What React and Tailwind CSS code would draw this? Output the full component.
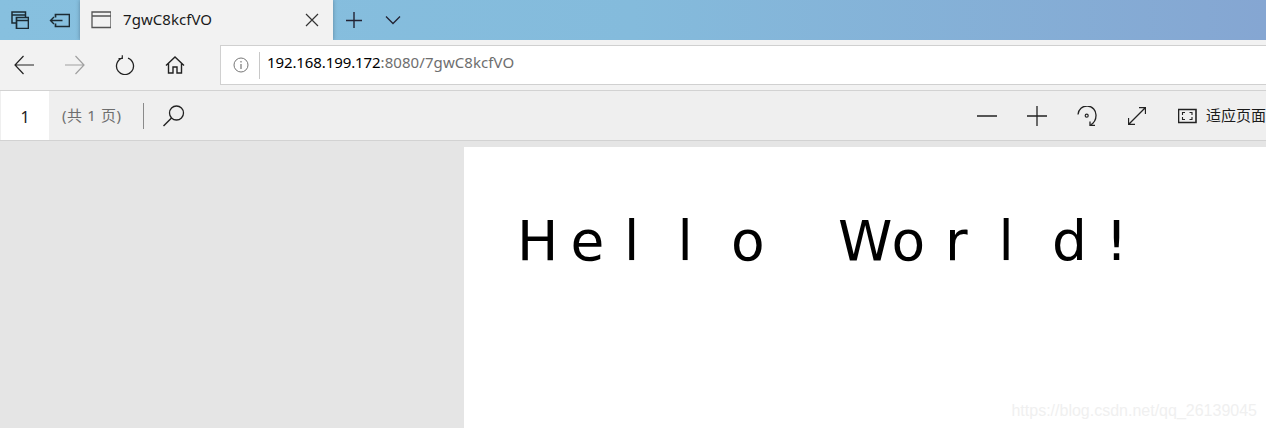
const ui = '[font-family:"Noto_Sans","Noto_Sans_CJK_SC",sans-serif]';
const hello = 'Hello World!'.split('');

function Icon({ size = 24, className = '', children }) {
    return (
        <svg width={size} height={size} viewBox={`0 0 ${size} ${size}`} fill="none" stroke="currentColor" className={className}>
            {children}
        </svg>
    );
}

function TabBar() {
    return (
        <div className="flex h-10 shrink-0 bg-gradient-to-r from-[#87c0df] via-[#84bbdc] to-[#85a6d2]">
            <div className="flex w-20 items-center text-[#1c2b33]">
                <Icon size={18} className="ml-[11px] shrink-0">
                    <path d="M5 12H1V1h13.500v5M1 4h13.500" strokeWidth="1.500" />
                    <path d="M5.500 6.500h12v11h-12zM5.500 9.500h12" strokeWidth="1.700" />
                </Icon>
                <Icon size={21} className="ml-[20px] shrink-0">
                    <path d="M1.500 10.500h12M5 7l-3.500 3.500L5 14" strokeWidth="1.400" />
                    <path d="M6.500 7.500v-3H20.500v12H6.500v-3" strokeWidth="1.700" />
                </Icon>
            </div>
            <div className="flex w-[253px] items-center bg-[#f2f2f2] shadow-[0_0_4px_rgba(40,60,80,0.45)]">
                <Icon size={20} className="ml-[11px] shrink-0 text-[#555]">
                    <path d="M1 2h19v15.500H1zM1 6h19" strokeWidth="1.300" />
                </Icon>
                <span className={`${ui} mb-[2px] ml-[12px] w-[182px] text-[15px] leading-none tracking-[0.05px] text-[#1a1a1a]`}>7gwC8kcfVO</span>
                <Icon size={14} className="shrink-0 text-[#333]">
                    <path d="M1 1l12 12M13 1L1 13" strokeWidth="1.200" />
                </Icon>
            </div>
            <div className="flex items-center text-[#223]">
                <Icon size={16} className="ml-[13px]">
                    <path d="M0 8.500h16M8 0v17" strokeWidth="1.400" />
                </Icon>
                <Icon size={16} className="ml-[23px]">
                    <path d="M1 4.500l7 7 7-7" strokeWidth="1.300" />
                </Icon>
            </div>
        </div>
    );
}

function AddressRow() {
    return (
        <div className="flex h-[51px] shrink-0 items-center border-b border-[#d2d2d2] bg-[#f2f2f2] pl-[14px]">
            <Icon size={20} className="shrink-0 text-[#222]">
                <path d="M1 10h19M9.500 1L1 10l8.500 9" strokeWidth="1.200" />
            </Icon>
            <Icon size={20} className="ml-[31px] shrink-0 text-[#a0a0a0]">
                <path d="M0 10h19M10.500 1l8.500 9-8.500 9" strokeWidth="1.200" />
            </Icon>
            <Icon size={20} className="ml-[30px] shrink-0 text-[#222]">
                <path d="M7 3.100A8.500 8.500 0 1 0 13 3.100" strokeWidth="1.300" />
                <path d="M7.300 0.200v3.300H3.500" strokeWidth="1.200" />
            </Icon>
            <Icon size={20} className="ml-[30px] shrink-0 text-[#222]">
                <path d="M1 10.500L10 2l9 8.500M3.500 8.500V18h4.500v-6h4v6h4.500V8.500" strokeWidth="1.400" />
            </Icon>
            <div className="ml-[35px] flex h-10 flex-1 items-center border border-[#d0d0d0] border-r-0 bg-white">
                <Icon size={16} className="ml-[12px] shrink-0 text-[#777]">
                    <circle cx="8" cy="8" r="7" strokeWidth="1" />
                    <path d="M8 7v5M8 4v1.500" strokeWidth="1.200" />
                </Icon>
                <div className="ml-[10px] h-[27px] w-px bg-[#c8c8c8]" />
                <span className={`${ui} mb-[5px] ml-[7px] text-[15px] tracking-[0.08px] text-[#6e6e6e]`}>
                    <span className="tracking-[-0.1px] text-black">192.168.199.172</span>:8080/7gwC8kcfVO
                </span>
            </div>
        </div>
    );
}

function PdfToolbar() {
    return (
        <div className={`${ui} flex h-[50px] shrink-0 items-center border-b border-[#d2d2d2] bg-[#efefef]`}>
            <div className="ml-px flex h-full w-[48px] items-center justify-center bg-white pt-[2px] text-[16px] text-[#222]">1</div>
            <span className="ml-[13px] w-[81px] text-[15px] tracking-[0.6px] whitespace-nowrap text-[#6e6e6e]">(共 1 页)</span>
            <div className="h-[26px] w-px bg-[#8a8a8a]" />
            <Icon size={24} className="ml-[18px] text-[#222]">
                <circle cx="14.500" cy="9" r="7" strokeWidth="1.300" />
                <path d="M9.500 14L1.500 22" strokeWidth="1.500" />
            </Icon>
            <div className="ml-auto flex items-center text-[#222]">
                <Icon size={20}>
                    <path d="M0 10h20" strokeWidth="1.500" />
                </Icon>
                <Icon size={20} className="ml-[30px]">
                    <path d="M0 10h20M10 0v20" strokeWidth="1.300" />
                </Icon>
                <Icon size={20} className="ml-[30px]">
                    <path d="M1 8.500A9 9 0 0 1 19 9.500C19 13.500 17 17 13.500 19" strokeWidth="1.300" />
                    <circle cx="9.700" cy="9.700" r="1.500" strokeWidth="1.200" />
                    <path d="M13 15.500v4h5" strokeWidth="1.300" />
                </Icon>
                <Icon size={18} className="ml-[31px]">
                    <path d="M0.500 17.500L17.500 0.500M11 0.500H17.500v6.500M0.500 11V17.500h6.500" strokeWidth="1.300" />
                </Icon>
                <Icon size={20} className="ml-[32px]">
                    <path d="M0.500 3.500h17.500v13H0.500z" strokeWidth="1.600" />
                    <path d="M4.500 9V6.500H7M11.500 6.500h2.500V9M4.500 11v2.500H7M11.500 13.500h2.500V11" strokeWidth="1.100" />
                </Icon>
                <span className="ml-[8px] w-[60px] text-[15px] whitespace-nowrap text-[#1a1a1a] [font-family:'Noto_Sans_CJK_SC',sans-serif]">适应页面</span>
            </div>
        </div>
    );
}

function PdfPage() {
    return (
        <div className="relative flex min-h-0 flex-1 bg-[#e5e5e5] pl-[464px] pt-[6px]">
            <div className="flex-1 bg-white pl-[53px] pt-[54px]">
                <h1 className="flex text-[55px] leading-[80px] font-normal text-black [font-family:'DejaVu_Sans',sans-serif]">
                    {hello.map((ch, i) => (
                        <span key={i} className="w-[53.5px] shrink-0 whitespace-pre">{ch}</span>
                    ))}
                </h1>
            </div>
            <span className="absolute right-[9px] bottom-[8px] text-[16px] leading-[18px] text-[#f0f0f0] [font-family:'Liberation_Sans',sans-serif]">
                https://blog.csdn.net/qq_26139045
            </span>
        </div>
    );
}

export default function App() {
    return (
        <div className="flex h-[428px] w-[1266px] flex-col overflow-hidden bg-white">
            <TabBar />
            <AddressRow />
            <PdfToolbar />
            <PdfPage />
        </div>
    );
}
